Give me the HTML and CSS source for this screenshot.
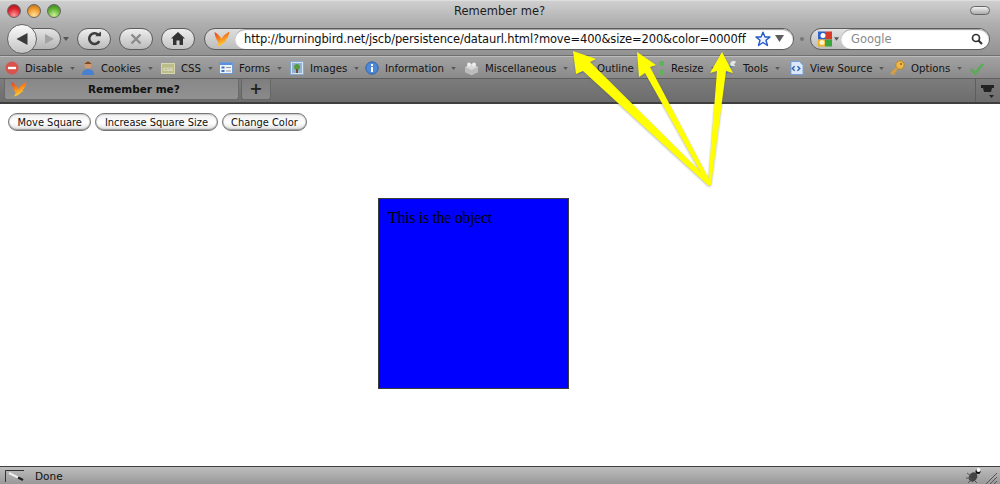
FILE: index.html
```html
<!DOCTYPE html>
<html lang="en">
<head>
<meta charset="utf-8">
<title>Remember me?</title>
<link rel="stylesheet" href="styles.css">
</head>
<body>
<svg class="defs" width="0" height="0" aria-hidden="true">
  <defs>
    <linearGradient id="birdg" x1="0" y1="0" x2="0.4" y2="1">
      <stop offset="0" stop-color="#e8351c"/><stop offset="0.55" stop-color="#f78a1d"/><stop offset="1" stop-color="#fbd53a"/>
    </linearGradient>
    <symbol id="bird" viewBox="0 0 16 16">
      <path fill="url(#birdg)" d="M0.500 1 C3 2.500 6 5 7.500 8 C8.500 5.500 11 3 15.500 0.500 C15 4.500 13.500 7.500 11.500 9.500 L12.500 10.500 L10.500 11 C8.500 13.500 6 15 2.500 15.500 C4 14 4.500 13 4.500 11.500 C2.500 9 1 5.500 0.500 1Z"/>
    </symbol>
    <symbol id="caret" viewBox="0 0 6 4"><path d="M0 0H6L3 4Z" fill="#555"/></symbol>
  </defs>
</svg>

<header class="chrome">
  <div class="titlebar">
    <div class="lights">
      <span class="light red"></span><span class="light amber"></span><span class="light green"></span>
    </div>
    <div class="title">Remember me?</div>
    <span class="pill"></span>
  </div>

  <div class="navbar">
    <div class="backfwd">
      <span class="fwd"><svg width="12" height="12" viewBox="0 0 12 12"><path d="M2 1L11 6L2 11Z" fill="#a3a3a3"/></svg></span>
      <span class="back"><svg width="14" height="14" viewBox="0 0 14 14"><path d="M12.500 1V13L1.500 7Z" fill="#3a3a3a"/></svg></span>
    </div>
    <svg class="navcaret" width="6" height="4"><use href="#caret"/></svg>
    <span class="navbtn reload"><svg width="15" height="15" viewBox="0 0 14 14"><path d="M11.500 9.500A5 5 0 1 1 10.500 3.500" fill="none" stroke="#3d3d3d" stroke-width="2.400"/><path d="M7.500 4.800H13V0.500Z" fill="#3d3d3d"/></svg></span>
    <span class="navbtn stop"><svg width="12" height="12" viewBox="0 0 12 12"><path d="M1.500 1.500L10.500 10.500M10.500 1.500L1.500 10.500" stroke="#8a8a8a" stroke-width="2.400"/></svg></span>
    <span class="navbtn home"><svg width="14" height="13" viewBox="0 0 14 13"><path d="M7 0L14 6.500H12V13H8.500V8.500H5.500V13H2V6.500H0Z" fill="#333"/></svg></span>
    <div class="urlbar">
      <span class="siteicon"><svg width="16" height="16"><use href="#bird"/></svg></span>
      <div class="urlfield">
        <span class="url">http://burningbird.net/jscb/persistence/dataurl.html?move=400&amp;size=200&amp;color=0000ff</span>
        <svg class="star" width="16" height="16" viewBox="0 0 16 16"><path d="M8 1.200L10 6H15L11 9.300L12.500 14.500L8 11.500L3.500 14.500L5 9.300L1 6H6Z" fill="#eef3fc" stroke="#2459c8" stroke-width="1.400" stroke-linejoin="round"/></svg>
        <svg class="dropcaret" width="9" height="7" viewBox="0 0 9 7"><path d="M0 0H9L4.500 7Z" fill="#5d5d5d"/></svg>
      </div>
    </div>
    <span class="dot"></span>
    <div class="searchbar">
      <span class="engine">
        <svg width="16" height="16" viewBox="0 0 16 16"><rect x="1" y="0.500" width="7" height="8" fill="#2f62c9"/><rect x="8" y="0.500" width="7" height="8" fill="#d83a2a"/><rect x="8" y="8.500" width="7" height="7" fill="#3aa53d"/><rect x="1" y="8.500" width="7" height="7" fill="#eeb32a"/><circle cx="6" cy="4.500" r="2.500" fill="#fff"/><circle cx="5" cy="11.500" r="2.500" fill="#fff3c8"/></svg>
        <svg width="5" height="4"><use href="#caret"/></svg>
      </span>
      <div class="searchfield">
        <span class="searchtext">Google</span>
        <svg class="mag" width="12" height="12" viewBox="0 0 12 12"><circle cx="5" cy="5" r="3.500" fill="none" stroke="#333" stroke-width="1.700"/><path d="M7.500 7.500L11 11" stroke="#333" stroke-width="2.200"/></svg>
      </div>
    </div>
  </div>

  <nav class="devbar">
    <span class="dev"><svg width="14" height="14" viewBox="0 0 14 14"><circle cx="7" cy="7" r="6.500" fill="#d9534c"/><rect x="3" y="5.800" width="8" height="2.400" fill="#fff"/></svg><span class="lab">Disable</span><svg class="cr" width="5" height="3"><use href="#caret"/></svg></span>
    <span class="dev"><svg width="14" height="16" viewBox="0 0 14 16"><circle cx="7" cy="5" r="3.500" fill="#d19a6c"/><path d="M3.500 4Q7 -1 10.500 4Z" fill="#7b4a22"/><path d="M1 15Q1 9 7 9Q13 9 13 15Z" fill="#4a80d0"/></svg><span class="lab">Cookies</span><svg class="cr" width="5" height="3"><use href="#caret"/></svg></span>
    <span class="dev"><span class="cssicon">css</span><span class="lab">CSS</span><svg class="cr" width="5" height="3"><use href="#caret"/></svg></span>
    <span class="dev"><svg width="14" height="14" viewBox="0 0 14 14"><rect x="0.500" y="1.500" width="13" height="11" fill="#eef3fb" stroke="#6f9bd8"/><rect x="1" y="2" width="12" height="2" fill="#5d90da"/><rect x="2.500" y="5.500" width="3" height="2" fill="#3f74c4"/><rect x="2.500" y="9" width="3" height="2" fill="#3f74c4"/><rect x="7" y="6" width="5" height="1" fill="#999"/><rect x="7" y="9.500" width="5" height="1" fill="#999"/></svg><span class="lab">Forms</span><svg class="cr" width="5" height="3"><use href="#caret"/></svg></span>
    <span class="dev"><svg width="14" height="14" viewBox="0 0 14 14"><rect x="0.500" y="0.500" width="13" height="13" fill="#d5e2f0" stroke="#8aa8c8"/><rect x="2" y="2" width="10" height="10" fill="#8fb3d8"/><circle cx="7" cy="6" r="3" fill="#5d9a3e"/><rect x="6" y="8" width="2" height="4" fill="#74512a"/></svg><span class="lab">Images</span><svg class="cr" width="5" height="3"><use href="#caret"/></svg></span>
    <span class="dev"><svg width="14" height="14" viewBox="0 0 14 14"><circle cx="7" cy="7" r="6.200" fill="#4f88d8" stroke="#2e62ad"/><rect x="6" y="6" width="2" height="5" fill="#fff"/><rect x="6" y="3" width="2" height="2" fill="#fff"/></svg><span class="lab">Information</span><svg class="cr" width="5" height="3"><use href="#caret"/></svg></span>
    <span class="dev"><svg width="15" height="14" viewBox="0 0 15 14"><path d="M7.500 3L14 6V11L7.500 14L1 11V6Z" fill="#d8d8d8"/><path d="M1 6L7.500 9L14 6V11L7.500 14L1 11Z" fill="#bcbcbc"/><circle cx="5" cy="3.500" r="2" fill="#eee"/><circle cx="10" cy="3.500" r="2" fill="#eee"/></svg><span class="lab">Miscellaneous</span><svg class="cr" width="5" height="3"><use href="#caret"/></svg></span>
    <span class="dev"><svg width="14" height="14" viewBox="0 0 14 14"><path d="M1 13L5 9L7 11Z" fill="#4d7fc4"/><path d="M5 9L12 2L13 3L7 11Z" fill="#9a9a9a"/></svg><span class="lab">Outline</span><svg class="cr" width="5" height="3"><use href="#caret"/></svg></span>
    <span class="dev"><svg width="14" height="16" viewBox="0 0 14 16"><rect x="8" y="1" width="5" height="5" rx="1" fill="#5fb35a"/><rect x="8" y="10" width="5" height="5" rx="1" fill="#5fb35a"/></svg><span class="lab">Resize</span><svg class="cr" width="5" height="3"><use href="#caret"/></svg></span>
    <span class="dev"><svg width="14" height="14" viewBox="0 0 14 14"><path d="M2 13L9 4" stroke="#4d7fc4" stroke-width="2.500"/><path d="M8 5A3 3 0 0 1 13 1L11 3.500L12.500 5Z" fill="#e4e4e4"/></svg><span class="lab">Tools</span><svg class="cr" width="5" height="3"><use href="#caret"/></svg></span>
    <span class="dev"><svg width="14" height="16" viewBox="0 0 15 16"><path d="M1 1H10L14 5V15H1Z" fill="#dbe8f8" stroke="#6c9bd8"/><path d="M5 6L2.500 8.500L5 11M8 6L10.500 8.500L8 11" fill="none" stroke="#2e62ad" stroke-width="1.500"/></svg><span class="lab">View Source</span><svg class="cr" width="5" height="3"><use href="#caret"/></svg></span>
    <span class="dev"><svg width="16" height="16" viewBox="0 0 16 16"><circle cx="11" cy="5" r="4.200" fill="#edb84a" stroke="#b9832a"/><path d="M8 8L2 14M3.500 12.500L5.500 14.500M5.500 10.500L7 12" stroke="#d9a03a" stroke-width="2.200" fill="none"/><circle cx="12" cy="4" r="1" fill="#8f6a22"/></svg><span class="lab">Options</span><svg class="cr" width="5" height="3"><use href="#caret"/></svg></span>
    <span class="dev"><svg width="14" height="13" viewBox="0 0 14 13"><path d="M1 7L5 11.500L13 2" fill="none" stroke="#56ad52" stroke-width="2.600"/></svg></span>
  </nav>

  <div class="tabbar">
    <div class="tab">
      <svg class="tabicon" width="16" height="16"><use href="#bird"/></svg>
      <span class="tablabel">Remember me?</span>
    </div>
    <div class="newtab">+</div>
    <div class="tabspace"></div>
    <div class="tablist"><svg width="16" height="14" viewBox="0 0 16 14"><path d="M1 1H14V4H12L11 8H4L3 4H1Z" fill="#222"/><path d="M9 11H14L11.500 14Z" fill="#222"/></svg></div>
  </div>
</header>

<main class="page">
  <div class="buttons">
    <button class="btn" type="button">Move Square</button>
    <button class="btn" type="button">Increase Square Size</button>
    <button class="btn" type="button">Change Color</button>
  </div>
  <div class="object">This is the object</div>
</main>

<footer class="status">
  <svg class="statusicon" width="20" height="12" viewBox="0 0 20 12"><path d="M0.500 12V0.500H19" fill="none" stroke="#333"/><path d="M4 3L14 8" stroke="#eee" stroke-width="2"/><path d="M13 7.500L18 10" stroke="#222" stroke-width="2.500"/></svg>
  <span class="statustext">Done</span>
  <svg class="bug" width="16" height="15" viewBox="0 0 16 15"><ellipse cx="7" cy="9" rx="4" ry="5" transform="rotate(35 7 9)" fill="#444"/><circle cx="12" cy="3.500" r="2.500" fill="#111"/><circle cx="12.500" cy="2" r="2" fill="#fff"/><path d="M1 5L5 8M0 10H5M2 15L6 11M9 13L11 15" stroke="#555"/></svg>
  <svg class="grip" width="11" height="11" viewBox="0 0 11 11"><path d="M0 11L11 0M4 11L11 4M8 11L11 8" stroke="#555"/></svg>
</footer>

<svg class="arrows" width="1000" height="484" viewBox="0 0 1000 484" aria-hidden="true">
  <g class="arrowset">
    <path d="M573 51L596 59L590 62L711 182L709 186L583 71L576 74Z"/>
    <path d="M637 52L656 65L650 67L711 183L708 185L645 73L639 77Z"/>
    <path d="M722 52L733 73L726 71L711 185L708 185L717 71L710 73Z"/>
  </g>
</svg>
</body>
</html>
```

FILE: styles.css
```css
* { box-sizing: border-box; }
html, body { margin: 0; padding: 0; }
body {
  width: 1000px;
  height: 484px;
  overflow: hidden;
  position: relative;
  display: flex;
  flex-direction: column;
  background: #fff;
  font-family: "DejaVu Sans", sans-serif;
  color: #111;
}
.defs { position: absolute; }

.chrome { flex: none; }

.titlebar {
  height: 22px;
  display: flex;
  align-items: center;
  padding: 0 3px 2px 7px;
  background: linear-gradient(#cfcfcf, #b1b1b1);
  border-top: 1px solid #dedede;
}
.lights { display: flex; gap: 6px; width: 60px; flex: none; }
.light { width: 14px; height: 14px; border-radius: 50%; border: 1px solid #666; }
.red { background: radial-gradient(circle at 50% 85%, #ff9a9a, #dc2530 55%, #9a1018); }
.amber { background: radial-gradient(circle at 50% 85%, #ffe09a, #f09a2c 55%, #b0641a); }
.green { background: radial-gradient(circle at 50% 85%, #c8f296, #62b233 55%, #33771d); }
.title { flex: 1; text-align: center; font-size: 11.500px; padding-right: 38px; color: #1c1c1c; }
.pill {
  width: 20px; height: 9px; margin-right: 7px; flex: none;
  border: 1px solid #666; border-radius: 5px;
  background: linear-gradient(#f2f2f2, #aaa);
}

.navbar {
  height: 34px;
  display: flex;
  align-items: center;
  padding: 0 0 0 7px;
  background: linear-gradient(#b0b0b0, #929292);
  border-bottom: 1px solid #6f6f6f;
}
.backfwd { position: relative; width: 54px; height: 30px; flex: none; }
.back {
  position: absolute; left: 0; top: 0;
  width: 30px; height: 30px; border-radius: 50%;
  display: flex; align-items: center; justify-content: center;
  border: 1px solid #666;
  background: linear-gradient(#fafafa, #c4c4c4);
}
.fwd {
  position: absolute; left: 18px; top: 4px;
  width: 36px; height: 22px; border-radius: 0 11px 11px 0;
  display: flex; align-items: center; justify-content: center; padding-left: 12px;
  border: 1px solid #5c5c5c;
  background: linear-gradient(#e4e4e4, #b4b4b4);
}
.navcaret { margin: 0 8px 0 2px; flex: none; }
.navbtn {
  width: 34px; height: 22px; border-radius: 11px; margin-right: 8px;
  display: flex; align-items: center; justify-content: center; flex: none;
  border: 1px solid #5c5c5c;
  background: linear-gradient(#eee, #bbb);
}
.navbtn.home { margin-right: 9px; background: linear-gradient(#eee, #c4c4c4); }
.urlbar {
  width: 590px; height: 22px; border-radius: 11px; flex: none;
  display: flex; align-items: center;
  border: 1px solid #5c5c5c;
  background: linear-gradient(#dedede, #bdbdbd);
  padding-left: 9px;
}
.siteicon { width: 16px; height: 16px; flex: none; }
.urlfield {
  flex: 1; height: 20px; margin-left: 5px; min-width: 0;
  display: flex; align-items: center;
  background: #fff;
  border-radius: 10px;
  padding: 0 9px 0 9px;
  box-shadow: inset 0 1px 1px #999;
}
.url { font-size: 11.500px; white-space: nowrap; color: #111; flex: 1; letter-spacing: -0.14px; }
.star { margin-right: 4px; flex: none; }
.dropcaret { flex: none; }
.dot { width: 4px; height: 4px; border-radius: 50%; background: #777; margin: 0 6px; flex: none; }
.searchbar {
  width: 180px; height: 22px; border-radius: 11px; flex: none;
  display: flex; align-items: center;
  border: 1px solid #5c5c5c;
  background: linear-gradient(#e2e2e2, #bdbdbd);
  padding-left: 6px;
}
.engine { display: flex; align-items: center; gap: 1px; flex: none; width: 24px; }
.searchfield {
  flex: 1; height: 20px;
  display: flex; align-items: center; justify-content: space-between;
  background: #fff; border-radius: 10px;
  padding: 0 6px 0 10px;
  box-shadow: inset 0 1px 1px #999;
}
.searchtext { font-size: 11.500px; color: #8a8a8a; }

.devbar {
  height: 23px;
  display: grid;
  grid-template-columns: 76px 80px 58px 71px 75px 99px 113px 74px 72px 67px 99px 81px 20px;
  align-items: center;
  padding: 1px 0 0 5px;
  background: linear-gradient(#a2a2a2, #8a8a8a);
  border-top: 1px solid #bcbcbc;
  border-bottom: 1px solid #5f5f5f;
}
.dev { display: flex; align-items: center; }
.dev > svg:first-child { flex: none; }
.lab { font-size: 10.200px; margin-left: 6px; color: #141414; white-space: nowrap; }
.cr { margin-left: 7px; flex: none; }
.cssicon {
  width: 14px; height: 11px; flex: none;
  background: #bdbd8a; border: 1px solid #d8d8b0;
  color: #eee; font-size: 6px; line-height: 9px; text-align: center;
}

.tabbar {
  height: 25px;
  display: flex;
  background: linear-gradient(#7c7c7c, #6d6d6d);
  border-bottom: 2px solid #3f3f3f;
  padding-left: 4px;
}
.tab {
  width: 235px; height: 21px;
  display: flex; align-items: center;
  background: linear-gradient(#888, #929292);
  border: 1px solid #6a6a6a; border-top: 0;
  border-radius: 0 0 3px 3px;
  padding-left: 6px;
  flex: none;
}
.tablabel { font-size: 10.500px; font-weight: bold; color: #111; margin-left: 61px; }
.newtab {
  width: 30px; height: 21px; margin-left: 2px;
  background: linear-gradient(#7e7e7e, #8a8a8a);
  border: 1px solid #666; border-top: 0;
  border-radius: 0 0 3px 3px;
  text-align: center; font-size: 16px; line-height: 19px; font-weight: bold; color: #222;
  flex: none;
}
.tabspace { flex: 1; }
.tablist {
  width: 25px; flex: none;
  border-left: 1px solid #5d5d5d;
  display: flex; align-items: center; justify-content: center;
}

.page { flex: 1; position: relative; min-height: 0; }
.buttons { display: flex; gap: 4px; padding: 9px 0 0 8px; }
.btn {
  height: 18px; padding: 0 8.500px;
  font-family: "DejaVu Sans", sans-serif; font-size: 9.900px; color: #111;
  border: 1px solid #777; border-radius: 9px;
  background: linear-gradient(#f0f0f0, #fff 55%, #ddd);
  box-shadow: inset 0 -1px 1px #999, inset 0 1px 1px #ccc;
  line-height: 15px;
}
.object {
  position: absolute; left: 378px; top: 94px;
  width: 191px; height: 191px;
  background: #0000ff;
  border: 1px solid #3b3b3b;
  padding: 10px 9px;
  font-family: "Liberation Serif", serif;
  font-size: 16px;
  letter-spacing: -0.33px;
  line-height: 18px;
  color: #000;
}

.status {
  height: 18px; flex: none;
  display: flex; align-items: center;
  padding: 0 3px 0 5px;
  background: linear-gradient(#bdbdbd, #999);
  border-top: 1px solid #3f3f3f;
}
.statusicon { flex: none; }
.statustext { font-size: 10.500px; margin-left: 10px; flex: 1; color: #111; }
.bug { margin-right: 4px; flex: none; }
.grip { flex: none; align-self: flex-end; }

.arrows { position: absolute; left: 0; top: 0; pointer-events: none; }
.arrowset { fill: #ffff00; filter: drop-shadow(0 1px 1px rgba(90, 90, 60, 0.45)); }
```
